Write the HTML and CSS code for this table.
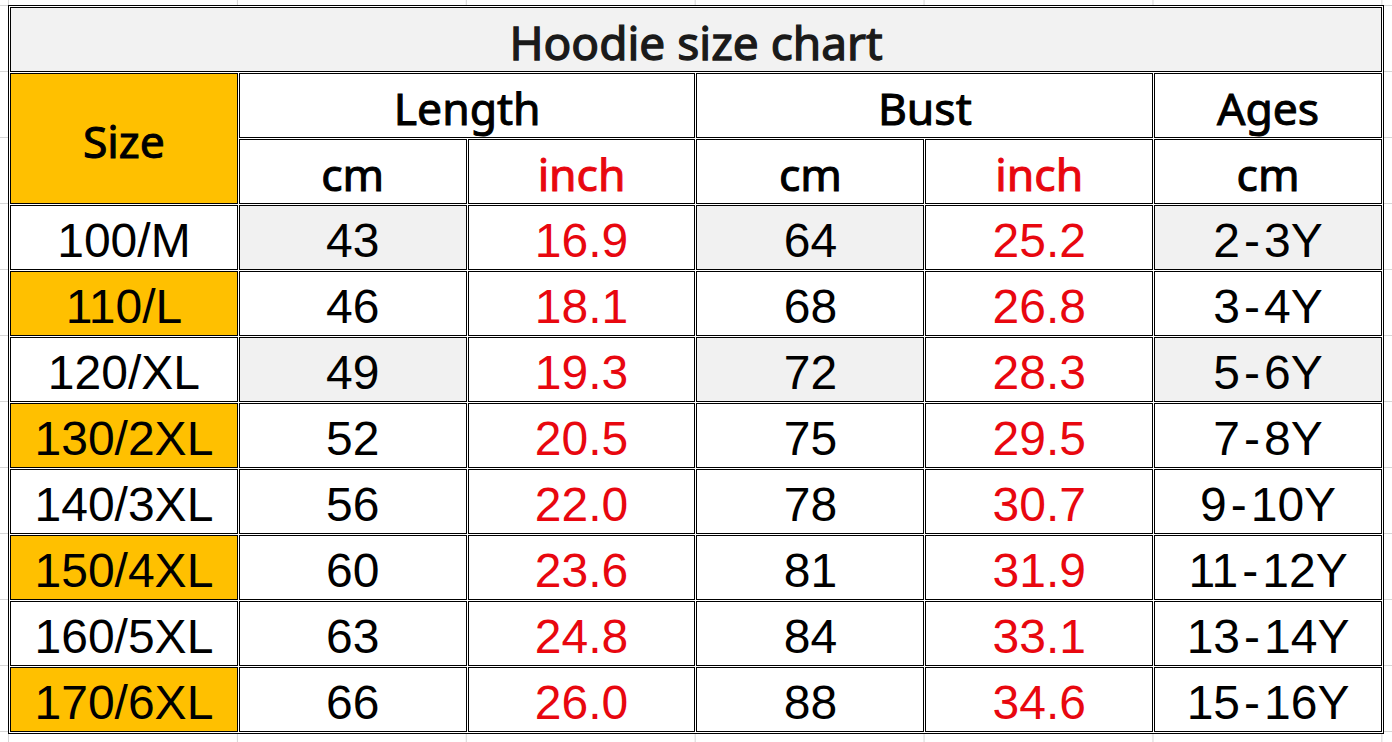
FILE: index.html
```html
<!DOCTYPE html>
<html lang="en">
<head>
<meta charset="utf-8">
<title>Hoodie size chart</title>
<link rel="stylesheet" href="styles.css">
</head>
<body>
<table class="chart">
  <colgroup>
    <col><col><col><col><col><col>
  </colgroup>
  <tr>
    <td class="title" colspan="6">Hoodie size chart</td>
  </tr>
  <tr>
    <td class="head gold" rowspan="2">Size</td>
    <td class="head" colspan="2">Length</td>
    <td class="head" colspan="2">Bust</td>
    <td class="head">Ages</td>
  </tr>
  <tr>
    <td class="head">cm</td>
    <td class="head red">inch</td>
    <td class="head">cm</td>
    <td class="head red">inch</td>
    <td class="head">cm</td>
  </tr>
  <tr>
    <td>100/M</td><td class="shade">43</td><td class="red">16.9</td><td class="shade">64</td><td class="red">25.2</td><td class="shade">2<span class="dash">-</span>3Y</td>
  </tr>
  <tr>
    <td class="gold">110/L</td><td>46</td><td class="red">18.1</td><td>68</td><td class="red">26.8</td><td>3<span class="dash">-</span>4Y</td>
  </tr>
  <tr>
    <td>120/XL</td><td class="shade">49</td><td class="red">19.3</td><td class="shade">72</td><td class="red">28.3</td><td class="shade">5<span class="dash">-</span>6Y</td>
  </tr>
  <tr>
    <td class="gold">130/2XL</td><td>52</td><td class="red">20.5</td><td>75</td><td class="red">29.5</td><td>7<span class="dash">-</span>8Y</td>
  </tr>
  <tr>
    <td>140/3XL</td><td>56</td><td class="red">22.0</td><td>78</td><td class="red">30.7</td><td>9<span class="dash">-</span>10Y</td>
  </tr>
  <tr>
    <td class="gold">150/4XL</td><td>60</td><td class="red">23.6</td><td>81</td><td class="red">31.9</td><td>11<span class="dash">-</span>12Y</td>
  </tr>
  <tr>
    <td>160/5XL</td><td>63</td><td class="red">24.8</td><td>84</td><td class="red">33.1</td><td>13<span class="dash">-</span>14Y</td>
  </tr>
  <tr>
    <td class="gold">170/6XL</td><td>66</td><td class="red">26.0</td><td>88</td><td class="red">34.6</td><td>15<span class="dash">-</span>16Y</td>
  </tr>
</table>
</body>
</html>
```
FILE: styles.css
```css
html {
  background-color: #ffffff;
  background-image:
    linear-gradient(to right, #d6d6d6 1px, transparent 1px),
    linear-gradient(to bottom, #d6d6d6 1px, transparent 1px);
  background-size: 228.9px 66px;
  background-position: 8px 5px;
  min-height: 100%;
}

body {
  margin: 5px 0 0 8px;
}

.chart {
  width: 1376px;
  table-layout: fixed;
  border-collapse: separate;
  border-spacing: 1px;
  border: 1px solid #000;
  background: #fff;
}

.chart td {
  box-sizing: border-box;
  height: 65px;
  padding: 6px 0 0;
  border: 1px solid #000;
  background: #fff;
  color: #000;
  text-align: center;
  vertical-align: middle;
  font-family: "Liberation Sans", Arial, sans-serif;
  font-size: 48px;
  line-height: 1;
  white-space: nowrap;
}

.dash {
  padding: 0 4px;
}

.chart td.title {
  background: #f2f2f2;
  color: #1a1a1a;
  font-family: "Noto Sans", "Open Sans", sans-serif;
  font-weight: 400;
  font-size: 46px;
  -webkit-text-stroke: 1.3px currentColor;
  padding-top: 5px;
}

.chart td.head {
  font-family: "Noto Sans", "Open Sans", sans-serif;
  font-weight: 400;
  font-size: 44.5px;
  -webkit-text-stroke: 1px currentColor;
  padding-top: 5px;
}

.chart td.gold {
  background: #ffc000;
}

.chart td.shade {
  background: #f1f1f1;
}

.chart td.red {
  color: #e8070f;
}
```
